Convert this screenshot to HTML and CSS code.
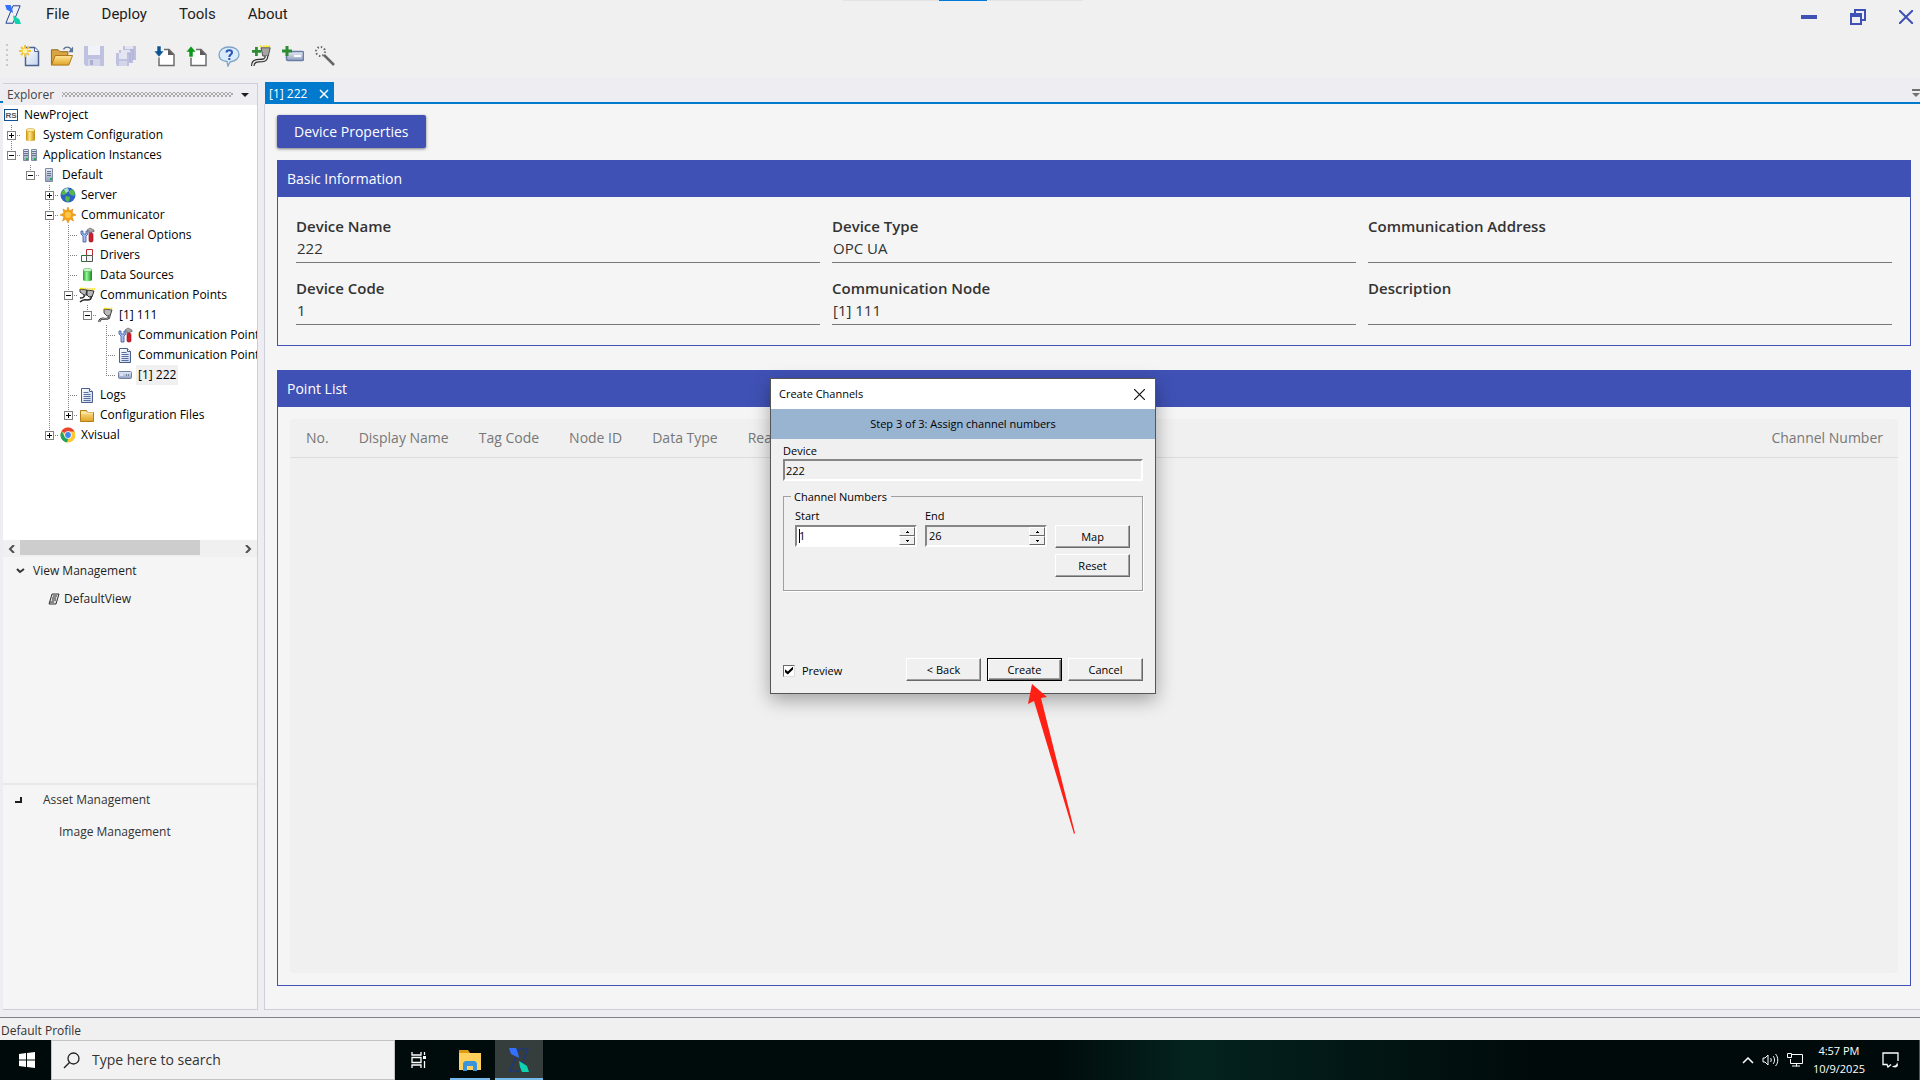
FILE: index.html
```html
<!DOCTYPE html>
<html lang="en">
<head>
<meta charset="utf-8">
<title>NewProject</title>
<link rel="stylesheet" href="styles.css">
</head>
<body>
<svg class="defs" aria-hidden="true">
  <defs>
    <linearGradient id="gold" x1="0" x2="1"><stop offset="0" stop-color="#c98f10"/><stop offset=".4" stop-color="#ffe680"/><stop offset="1" stop-color="#c08a10"/></linearGradient>
    <linearGradient id="green" x1="0" x2="1"><stop offset="0" stop-color="#16a016"/><stop offset=".4" stop-color="#9cf59c"/><stop offset="1" stop-color="#0f8a1c"/></linearGradient>
    <linearGradient id="folder" x1="0" y1="0" x2="0" y2="1"><stop offset="0" stop-color="#ffe79a"/><stop offset="1" stop-color="#e0a224"/></linearGradient>
    <linearGradient id="paper" x1="0" y1="0" x2="1" y2="1"><stop offset="0" stop-color="#ffffff"/><stop offset="1" stop-color="#c3d3ee"/></linearGradient>
    <linearGradient id="steel" x1="0" y1="0" x2="0" y2="1"><stop offset="0" stop-color="#e9eef8"/><stop offset="1" stop-color="#8f9fc0"/></linearGradient>
  </defs>
  <symbol id="logo" viewBox="0 0 20 24">
    <path d="M10 1h9L10 23H1z" fill="none" stroke="#17388c" stroke-width="1.200"/>
    <path d="M0 0h7l2 5 1 5-4-2-4-2z" fill="#3270ff"/>
    <path d="M10 13l5 3 3 2 2 6h-7l-2-5z" fill="#0fd3ad"/>
  </symbol>
  <symbol id="cylinder" viewBox="0 0 16 16">
    <path d="M4 3v10c0 1.500 9 1.500 9 0V3z" fill="url(#gold)"/><ellipse cx="8.500" cy="3" rx="4.500" ry="1.500" fill="#fff0b0" stroke="#c99a20" stroke-width=".6"/>
  </symbol>
  <symbol id="cylinder-green" viewBox="0 0 16 16">
    <path d="M4 3v10c0 1.500 9 1.500 9 0V3z" fill="url(#green)"/><ellipse cx="8.500" cy="3" rx="4.500" ry="1.500" fill="#d4ffd4" stroke="#3aa63a" stroke-width=".6"/>
  </symbol>
  <symbol id="server" viewBox="0 0 16 16">
    <path d="M4.500 1.500h7v13h-7z" fill="url(#steel)" stroke="#7f8ca0"/><path d="M6 4.500h4M6 6.500h4M6 8.500h4" stroke="#64748c"/><path d="M9 11h2v2H9z" fill="#21b14c"/>
  </symbol>
  <symbol id="servers" viewBox="0 0 16 16">
    <path d="M1.500 2.500h5v11h-5zM9.500 2.500h5v11h-5z" fill="url(#steel)" stroke="#7f8ca0"/><path d="M2 4.500h4M2 6.500h4M2 8.500h4M10 4.500h4M10 6.500h4M10 8.500h4" stroke="#64748c"/><path d="M4 11h2v2H4zM12 11h2v2h-2z" fill="#21b14c"/>
  </symbol>
  <symbol id="globe" viewBox="0 0 16 16">
    <circle cx="8" cy="8" r="7.500" fill="#2b62c4"/><path d="M3 3l4-2 1 3-2 3-3 1-2-1zM9 4l4-2 2 4-1 3-3-1-2-2zM6 9l4 1-1 4-2 1-2-3z" fill="#58b74a"/><path d="M4 2l4-1 1 3-3 2z" fill="#c7e8f5" opacity=".8"/>
  </symbol>
  <symbol id="burst" viewBox="0 0 16 16">
    <path d="M8 0l1.500 4L13 2l-1 4 4 2-4 1.500L13.500 14 10 12l-2 4-2-4-3.500 2L4 9.500 0 8l4-2-1-4 3.500 2z" fill="#f6a416" stroke="#d9860c" stroke-width=".6"/><circle cx="8" cy="8" r="3" fill="#ffc64a"/>
  </symbol>
  <symbol id="tools" viewBox="0 0 16 16">
    <path d="M2 4v3l2 2v6h3V9l2-2V4H7v3H4V4z" fill="#a9bdf0" stroke="#35539a" stroke-width=".8"/><path d="M8 3l3-2 4 2v2l-2-1v2h-3V4z" fill="#aaa" stroke="#555" stroke-width=".6"/><rect x="10" y="6" width="4" height="9" rx="1.500" fill="#cf1f2c" stroke="#8c0d18" stroke-width=".6"/>
  </symbol>
  <symbol id="blocks" viewBox="0 0 16 16">
    <path d="M7.500 2.500h6v6h-6z" fill="#fff" stroke="#bb2a33"/><path d="M2.500 8.500h5v6h-5z" fill="#fff" stroke="#22752a"/><path d="M7.500 8.500h6v6h-6z" fill="#f3f3f3" stroke="#555"/>
  </symbol>
  <symbol id="plug" viewBox="0 0 16 16">
    <path d="M6 2l8 1-2 6H9L6 6z" fill="#b9b9b9" stroke="#333" stroke-width=".9"/><path d="M6 1.500h9" stroke="#f1d900" stroke-width="1.500" stroke-dasharray="1.500 .7"/><path d="M11 8c1 3-1 4-4 4-3-1-5 0-6 3" fill="none" stroke="#222" stroke-width="2.200"/><path d="M11 8c1 3-1 4-4 4-3-1-5 0-6 3" fill="none" stroke="#ddd" stroke-width=".8"/>
  </symbol>
  <symbol id="plugs" viewBox="0 0 16 16">
    <path d="M1 2l7 1v5H5L1 5zM8 3l7 1-2 6h-3L7 7z" fill="#b9b9b9" stroke="#222" stroke-width=".9"/><path d="M1 1.500h7M8 2h8" stroke="#f1d900" stroke-width="1.500" stroke-dasharray="1.500 .7"/><path d="M12 9c1 3-1 4-4 4-3-1-5 0-7 2M5 8c1 2-1 3-4 3" fill="none" stroke="#222" stroke-width="1.500"/>
  </symbol>
  <symbol id="doc" viewBox="0 0 16 16">
    <path d="M2.500 1.500h8l3 3v11h-11z" fill="url(#paper)" stroke="#4a5f8c"/><path d="M10.500 1.500v3h3" fill="#fff" stroke="#4a5f8c"/><path d="M4.500 5.500h5M4.500 7.500h7M4.500 9.500h7M4.500 11.500h7M4.500 13.500h7" stroke="#5a6f9c"/>
  </symbol>
  <symbol id="device" viewBox="0 0 16 16">
    <rect x="1.500" y="4.500" width="13" height="7" rx="1" fill="url(#steel)" stroke="#7181a6"/><path d="M3 8h3" stroke="#fff"/><path d="M9 8h1M11 8h1" stroke="#29446e"/>
  </symbol>
  <symbol id="dir" viewBox="0 0 16 16">
    <path d="M1.500 3.500h6l1 2h6v9h-13z" fill="url(#folder)" stroke="#b07d17"/><path d="M2 6h12" stroke="#fff3c0"/>
  </symbol>
  <symbol id="chrome" viewBox="0 0 16 16">
    <circle cx="8" cy="8" r="7.500" fill="#fcc934"/><path d="M8 8L1.500 4.200A7.500 7.500 0 0 1 14.500 4.500H8z" fill="#ea4335"/><path d="M1.500 4.200L5 10l3.500 1L7 15.400A7.500 7.500 0 0 1 1.500 4.200z" fill="#1ea362"/><circle cx="8" cy="8" r="3.700" fill="#fff"/><circle cx="8" cy="8" r="2.900" fill="#4285f4"/>
  </symbol>
  <symbol id="plus-green" viewBox="0 0 10 10"><path d="M3.500 0h3v3.500H10v3H6.500V10h-3V6.500H0v-3h3.500z" fill="#2e8b35"/></symbol>
</svg>

<div class="top-strip"></div>

<header class="menubar">
  <svg class="logo"><use href="#logo"/></svg>
  <nav class="menu">
    <button>File</button><button>Deploy</button><button>Tools</button><button>About</button>
  </nav>
  <div class="window-controls">
    <button aria-label="Minimize"><svg width="16" height="16"><path d="M0 6h16v4H0z" fill="#3f51b5"/></svg></button>
    <button aria-label="Restore"><svg width="16" height="16"><path d="M5 4V1h10v10h-3M1 5h10v10H1z" fill="none" stroke="#3f51b5" stroke-width="2"/><path d="M0 4h12v4H0z" fill="#3f51b5"/></svg></button>
    <button aria-label="Close"><svg width="14" height="14"><path d="M0 0l14 14M14 0L0 14" stroke="#3f51b5" stroke-width="2"/></svg></button>
  </div>
</header>

<div class="toolbar">
  <span class="grip"></span>
  <button aria-label="New"><svg viewBox="0 0 22 22"><path d="M6.500 2.500h9l4 4v14h-13z" fill="url(#paper)" stroke="#4c638f" stroke-width="1.500"/><path d="M15.500 2.500v4h4" fill="#fff" stroke="#4c638f"/><path d="M6 0v12M0 6h12M2 2l8 8M10 2l-8 8" stroke="#f2c43b" stroke-width="2"/><circle cx="6" cy="6" r="2.500" fill="#fff3a8"/></svg></button>
  <button aria-label="Open"><svg class="wide" viewBox="0 0 25 22"><path d="M1.500 20.500v-16h7l2 2h8v5" fill="#d9a441" stroke="#8f6a1c"/><path d="M1.500 20.500l4-10h18l-4 10z" fill="url(#folder)" stroke="#a97416"/><path d="M14 4c2-3 6-3 8 0" fill="none" stroke="#5a7391" stroke-width="1.500"/><path d="M24 1v6h-5z" fill="#5a7391"/></svg></button>
  <button aria-label="Save" disabled><svg viewBox="0 0 22 22"><path d="M1 1h20v20H3l-2-2z" fill="#a9aed8"/><path d="M5 1h12v9H5z" fill="#f4f5fc"/><path d="M5 14h12v7H5z" fill="#c9cce4"/><path d="M7 15h3v5H7z" fill="#8d93c5"/></svg></button>
  <button aria-label="Save all" disabled><svg viewBox="0 0 22 22"><path d="M8 1h13v14h-3v3h-4v3H2l-1-2V8h3V5h4z" fill="#a9aed8"/><path d="M10 1h8v3h-8zM6 5h9v3H6zM4 8h8v6H4z" fill="#dfe1f2"/><path d="M4 16h8v5H4z" fill="#c9cce4"/><path d="M15 5h3v10M12 8h3v9" fill="none" stroke="#8d93c5"/></svg></button>
  <button class="spaced" aria-label="Import"><svg viewBox="0 0 22 22"><path d="M10 4.500h5l5 5v11H5v-8" fill="#fff" stroke="#6d6d6d" stroke-width="1.500"/><path d="M14 4v6h6z" fill="#5d5d5d"/><path d="M3 1h4v5h3l-5 6-5-6h3z" fill="#0b5394" stroke="#fff" stroke-width=".5"/></svg></button>
  <button aria-label="Export"><svg viewBox="0 0 22 22"><path d="M10 4.500h5l5 5v11H5v-8" fill="#fff" stroke="#6d6d6d" stroke-width="1.500"/><path d="M14 4v6h6z" fill="#5d5d5d"/><path d="M3 12h4V7h3L5 1 0 7h3z" fill="#0d9a1b" stroke="#fff" stroke-width=".5"/></svg></button>
  <button aria-label="Help"><svg viewBox="0 0 22 22"><path d="M11 2c6 0 10 3 10 7.500S17 16 12 17l-2 4-1-4.500C4 16 1 13.500 1 9.500S5 2 11 2z" fill="#d9ebfa" stroke="#7fa3c4" stroke-width="1.300"/><path d="M8.500 7.500c0-3 5.500-3 5.500 0 0 2-2.700 2-2.700 4.500" fill="none" stroke="#2a53b8" stroke-width="2"/><path d="M10.300 13h2v2h-2z" fill="#2a53b8"/></svg></button>
  <button aria-label="Add communication point"><svg class="wide" viewBox="0 0 24 24"><path d="M12 3h10l-2 9h-6z" fill="#a5a5a5" stroke="#444"/><path d="M11 1.500h12" stroke="#f1df00" stroke-width="2" stroke-dasharray="2 1"/><path d="M18 12c0 5-4 5-8 5-5 0-7 2-7 6" fill="none" stroke="#333" stroke-width="4"/><path d="M18 12c0 5-4 5-8 5-5 0-7 2-7 6" fill="none" stroke="#e6e6e6" stroke-width="1.500"/><use href="#plus-green" x="2" y="2" width="10" height="10"/></svg></button>
  <button aria-label="Add device"><svg viewBox="0 0 22 22"><rect x="4.500" y="6.500" width="17" height="9" rx="1.500" fill="url(#steel)" stroke="#6a7da5" stroke-width="1.500"/><path d="M12 11h7" stroke="#fff" stroke-width="2"/><use href="#plus-green" x="0" y="1" width="10" height="10"/></svg></button>
  <button aria-label="Wizard"><svg viewBox="0 0 22 22"><path d="M10 10l10 10" stroke="#666" stroke-width="2.500"/><circle cx="6.500" cy="6.500" r="4.500" fill="none" stroke="#666" stroke-width="2" stroke-dasharray="1.500 2"/></svg></button>
</div>

<main class="workspace">
  <div class="edge"></div>
  <aside class="explorer">
    <div class="pane-title"><h2>Explorer</h2><span class="dots"></span><button aria-label="Pane options"><svg width="8" height="4"><path d="M0 0h8L4 4z" fill="#1e1e1e"/></svg></button></div>
    <section class="tree-pane">
      <div class="tree-scroll">
      <ul class="tree">
        <li class="root"><div class="row"><svg class="icon"><rect x="1.500" y="2.500" width="13" height="11" fill="#fff" stroke="#0f4f94"/><text x="8" y="11" text-anchor="middle" class="rs">RS</text></svg><span class="label">NewProject</span></div></li>
        <li><div class="row"><button class="toggle closed" aria-label="Expand"></button><svg class="icon"><use href="#cylinder"/></svg><span class="label">System Configuration</span></div></li>
        <li><div class="row"><button class="toggle" aria-label="Collapse"></button><svg class="icon"><use href="#servers"/></svg><span class="label">Application Instances</span></div>
          <ul>
            <li><div class="row"><button class="toggle" aria-label="Collapse"></button><svg class="icon"><use href="#server"/></svg><span class="label">Default</span></div>
              <ul>
                <li><div class="row"><button class="toggle closed" aria-label="Expand"></button><svg class="icon"><use href="#globe"/></svg><span class="label">Server</span></div></li>
                <li><div class="row"><button class="toggle" aria-label="Collapse"></button><svg class="icon"><use href="#burst"/></svg><span class="label">Communicator</span></div>
                  <ul>
                    <li><div class="row leaf"><svg class="icon"><use href="#tools"/></svg><span class="label">General Options</span></div></li>
                    <li><div class="row leaf"><svg class="icon"><use href="#blocks"/></svg><span class="label">Drivers</span></div></li>
                    <li><div class="row leaf"><svg class="icon"><use href="#cylinder-green"/></svg><span class="label">Data Sources</span></div></li>
                    <li><div class="row"><button class="toggle" aria-label="Collapse"></button><svg class="icon"><use href="#plugs"/></svg><span class="label">Communication Points</span></div>
                      <ul>
                        <li><div class="row"><button class="toggle" aria-label="Collapse"></button><svg class="icon"><use href="#plug"/></svg><span class="label">[1] 111</span></div>
                          <ul>
                            <li><div class="row leaf"><svg class="icon"><use href="#tools"/></svg><span class="label">Communication Point Options</span></div></li>
                            <li><div class="row leaf"><svg class="icon"><use href="#doc"/></svg><span class="label">Communication Point Logs</span></div></li>
                            <li><div class="row leaf"><svg class="icon"><use href="#device"/></svg><span class="label selected">[1] 222</span></div></li>
                          </ul>
                        </li>
                      </ul>
                    </li>
                    <li><div class="row leaf"><svg class="icon"><use href="#doc"/></svg><span class="label">Logs</span></div></li>
                    <li><div class="row"><button class="toggle closed" aria-label="Expand"></button><svg class="icon"><use href="#dir"/></svg><span class="label">Configuration Files</span></div></li>
                  </ul>
                </li>
                <li><div class="row"><button class="toggle closed" aria-label="Expand"></button><svg class="icon"><use href="#chrome"/></svg><span class="label">Xvisual</span></div></li>
              </ul>
            </li>
          </ul>
        </li>
      </ul>
      </div>
      <div class="hscroll">
        <button aria-label="Scroll left"><svg width="7" height="8"><path d="M6 0L2 4l4 4" fill="none" stroke="#505050" stroke-width="2"/></svg></button>
        <div class="track"><div class="thumb"></div></div>
        <button aria-label="Scroll right"><svg width="7" height="8"><path d="M1 0l4 4-4 4" fill="none" stroke="#505050" stroke-width="2"/></svg></button>
      </div>
    </section>
    <section class="views">
      <div class="group"><svg width="9" height="6"><path d="M1 1l3 3 4-3" fill="none" stroke="#333" stroke-width="2"/></svg>View Management</div>
      <a class="child" href="#view"><svg width="12" height="12"><path d="M4 1h7L8 11H1z" fill="#ddd" stroke="#333"/><path d="M5 3h4M4 5h4M4 7h4M2 9h4" stroke="#333"/></svg>DefaultView</a>
    </section>
    <section class="assets">
      <div class="group"><svg width="7" height="6"><path d="M0 5h6V0" fill="none" stroke="#1e1e1e" stroke-width="2"/></svg>Asset Management</div>
      <a class="child" href="#images">Image Management</a>
    </section>
  </aside>

  <section class="document">
    <div class="tabs">
      <div class="tab">[1] 222<button aria-label="Close tab"><svg width="10" height="10"><path d="M1 1l8 8M9 1L1 9" stroke="#fff" stroke-width="1.500"/></svg></button></div>
      <button class="tab-list" aria-label="Open tabs"><svg width="8" height="8"><path d="M0 0h8v2H0zM0 4h8L4 8z" fill="#717171"/></svg></button>
    </div>
    <div class="page">
      <button class="primary">Device Properties</button>
      <section class="card">
        <h3>Basic Information</h3>
        <div class="fields">
          <label>Device Name<input readonly value="222"></label>
          <label>Device Type<input readonly value="OPC UA"></label>
          <label>Communication Address<input readonly value=""></label>
          <label>Device Code<input readonly value="1"></label>
          <label>Communication Node<input readonly value="[1] 111"></label>
          <label>Description<input readonly value=""></label>
        </div>
      </section>
      <section class="card points">
        <h3>Point List</h3>
        <div class="grid">
          <table>
            <thead><tr><th>No.</th><th>Display Name</th><th>Tag Code</th><th>Node ID</th><th>Data Type</th><th class="fill">Read</th><th>Channel Number</th></tr></thead>
          </table>
        </div>
      </section>
    </div>
  </section>
</main>

<div class="status">Default Profile</div>

<footer class="taskbar">
  <button class="start" aria-label="Start"><svg width="16" height="16"><path d="M0 2l7-1v6.500H0zM8 1l8-1v7.500H8zM0 8.500h7V15l-7-1zM8 8.500h8V16l-8-1z" fill="#fff"/></svg></button>
  <label class="search"><svg width="17" height="17"><circle cx="10.500" cy="6.500" r="5.500" fill="none" stroke="#222" stroke-width="1.300"/><path d="M6.500 10.500L1 16" stroke="#222" stroke-width="1.500"/></svg><input type="text" placeholder="Type here to search" aria-label="Search"></label>
  <button class="task" aria-label="Task view"><svg width="18" height="18"><path d="M2 1v3h9V1M2 17v-3h9v3M2 6.500h9v5H2zM14.500 1v3M14.500 10v7" fill="none" stroke="#fff" stroke-width="1.300"/><path d="M13 5h3v3h-3z" fill="#fff"/></svg></button>
  <button class="task open" aria-label="File Explorer"><svg width="22" height="21"><path d="M0 0h9l2 3H0z" fill="#e09c12"/><path d="M0 3h22v17H0z" fill="#ffd05c"/><path d="M4 13l2-2h10l2 2v8h-4v-5H8v5H4z" fill="#3b93dc"/></svg></button>
  <button class="task open active" aria-label="Designer"><svg class="logo big"><use href="#logo"/></svg></button>
  <div class="tray">
    <svg width="12" height="7"><path d="M1 6l5-5 5 5" fill="none" stroke="#fff" stroke-width="1.500"/></svg>
    <svg width="17" height="14"><path d="M1 5h2l3-3v10L3 9H1z" fill="none" stroke="#fff"/><path d="M8.500 5c1 1 1 3 0 4M11 3c2 2 2 6 0 8M13.500 1c3 3 3 9 0 12" fill="none" stroke="#fff"/></svg>
    <svg width="16" height="14"><path d="M5 1.500h10.500v9H3.500V6M9.500 10.500v3M5 13h8M.5.500h4v4h-4z" fill="none" stroke="#fff"/></svg>
    <time>4:57 PM<br>10/9/2025</time>
    <svg width="17" height="16"><path d="M9 12.500L6 15l-1-2.500H1V1h15v8" fill="none" stroke="#fff" stroke-width="1.300"/><path d="M15 10c0 3-2 4-5 4 1 2 6 2 6-1z" fill="#fff"/></svg>
  </div>
</footer>

<form class="dialog" role="dialog" aria-label="Create Channels">
  <div class="dialog-title">Create Channels<button type="button" aria-label="Close"><svg width="11" height="11"><path d="M0 0l11 11M11 0L0 11" stroke="#111" stroke-width="1.200"/></svg></button></div>
  <div class="banner">Step 3 of 3: Assign channel numbers</div>
  <div class="dialog-body">
    <label class="stack">Device<input class="sunken" readonly value="222"></label>
    <fieldset>
      <legend>Channel Numbers</legend>
      <label class="stack">Start
        <span class="spin sunken focused"><input type="number" value="1"><span class="steps"><button type="button" aria-label="Increase start"><svg width="3" height="2"><path d="M1 0h1v1h1v1H0V1h1z"/></svg></button><button type="button" aria-label="Decrease start"><svg width="3" height="2"><path d="M0 0h3v1H2v1H1V1H0z"/></svg></button></span></span>
      </label>
      <label class="stack">End
        <span class="spin sunken"><input type="number" readonly value="26"><span class="steps"><button type="button" aria-label="Increase end"><svg width="3" height="2"><path d="M1 0h1v1h1v1H0V1h1z"/></svg></button><button type="button" aria-label="Decrease end"><svg width="3" height="2"><path d="M0 0h3v1H2v1H1V1H0z"/></svg></button></span></span>
      </label>
      <div class="side"><button type="button" class="btn">Map</button><button type="button" class="btn">Reset</button></div>
    </fieldset>
    <div class="actions">
      <label class="check"><input type="checkbox" checked>Preview</label>
      <button type="button" class="btn">&lt; Back</button>
      <button type="button" class="btn default">Create</button>
      <button type="button" class="btn">Cancel</button>
    </div>
  </div>
</form>
<svg class="arrow" viewBox="0 0 48 152" aria-hidden="true"><path d="M4 0l15 13-6 1 34 135-1 1L6 17l-6 3z" fill="#ff2015"/></svg>
</body>
</html>
```
FILE: styles.css
```css
* { box-sizing: border-box; }
html, body { margin: 0; height: 100%; }
body {
  display: flex;
  flex-direction: column;
  min-height: 100vh;
  overflow: hidden;
  background: #f0f0f0;
  color: #1e1e1e;
  font: 12px/20px "Open Sans", "Noto Sans", sans-serif;
}
button, input { font: inherit; color: inherit; }
button { padding: 0; border: 0; background: none; }
svg { display: block; flex: none; }
ul { list-style: none; margin: 0; padding: 0; }
h2, h3 { margin: 0; font: inherit; }
a { color: inherit; text-decoration: none; }
.defs { position: absolute; width: 0; height: 0; }

.top-strip {
  position: absolute;
  top: 0;
  left: 843px;
  width: 240px;
  height: 1px;
  background: linear-gradient(90deg, #e3e3e3 40%, #0078d7 40% 60%, #e3e3e3 60%);
}

/* Menu bar */
.menubar { display: flex; align-items: center; height: 28px; padding: 0 7px 0 4px; }
.logo { width: 18px; height: 19px; }
.logo.big { width: 20px; height: 24px; }
.menu { display: flex; gap: 32px; margin-left: 24px; font: 15px/20px Roboto, sans-serif; }
.window-controls { display: flex; align-items: center; gap: 33px; margin: 6px 0 0 auto; }

/* Toolbar */
.toolbar { display: flex; align-items: center; height: 49px; padding: 6px 0 0 6px; }
.toolbar button { display: grid; place-items: center; width: 32px; height: 32px; }
.toolbar .spaced { margin-left: 7px; }
.toolbar svg { width: 22px; height: 22px; }
.toolbar svg.wide { width: 24px; }
.toolbar button:disabled { opacity: .7; }
.grip { width: 2px; height: 24px; margin-right: 6px; background: repeating-linear-gradient(#c9c9c9 0 2px, transparent 2px 5px); }

/* Workspace */
.workspace { display: grid; grid-template-columns: 3px 255px minmax(0, 1fr); flex: 1; min-height: 0; padding: 6px 0 7px; background: #eeeef2; }
.edge { background: linear-gradient(#007acc, #007acc) 0 18px / 3px 2px no-repeat; }
.explorer { display: grid; grid-template-columns: minmax(0, 1fr); grid-template-rows: 21px 2fr 1fr 1fr; min-height: 0; border: 1px solid #ccceda; border-left: 0; background: #f5f5f5; }
.pane-title { display: flex; align-items: center; gap: 8px; padding: 0 8px 0 4px; background: #eeeef2; color: #444; }
.dots { flex: 1; height: 5px; background: radial-gradient(#aaa 25%, transparent 30%) 0 0 / 4px 4px, radial-gradient(#aaa 25%, transparent 30%) 2px 2px / 4px 4px; }

.tree-pane { display: flex; flex-direction: column; min-height: 0; background: #fff; color: #000; }
.tree-scroll { flex: 1; min-height: 0; overflow: hidden; }
.tree li { background: repeating-linear-gradient(#808080 0 1px, transparent 1px 2px) 8px 0 / 1px 100% no-repeat; }
.tree li:last-child { background-size: 1px 10px; }
.tree .root { background: none; }
.tree ul { padding-left: 19px; }
.row { display: flex; align-items: center; height: 20px; white-space: nowrap; background: repeating-linear-gradient(90deg, #808080 0 1px, transparent 1px 2px) 8px 10px / 10px 1px no-repeat; }
.root .row { background: none; }
.row.leaf { padding-left: 19px; }
.icon { width: 16px; height: 16px; margin-right: 3px; }
.rs { font: bold 8px "Liberation Sans", sans-serif; fill: #555; }
.toggle {
  width: 9px;
  height: 9px;
  margin: 0 6px 0 4px;
  border: 1px solid #808080;
  background: linear-gradient(#000, #000) center / 5px 1px no-repeat, #fff;
}
.toggle.closed { background: linear-gradient(#000, #000) center / 5px 1px no-repeat, linear-gradient(#000, #000) center / 1px 5px no-repeat, #fff; }
.label { padding: 0 2px; }
.selected { background: #f0f0f0; }

.hscroll { display: flex; height: 17px; background: #f0f0f0; }
.hscroll button { display: grid; place-items: center; width: 17px; }
.track { flex: 1; }
.thumb { width: 82%; height: 15px; background: #cdcdcd; }

.group { display: flex; align-items: center; }
.child { display: flex; align-items: center; }
.views { padding: 4px 0 0 13px; }
.views .group { gap: 8px; }
.views .child { gap: 4px; padding: 8px 0 0 32px; }
.assets { padding: 5px 0 0 12px; border-top: 2px solid #e8e8e8; color: #333; }
.assets .group { gap: 21px; }
.assets .child { padding: 12px 0 0 44px; }

/* Document area */
.document { display: flex; flex-direction: column; min-width: 0; margin-left: 6px; }
.tabs { display: flex; align-items: center; justify-content: space-between; height: 21px; margin-left: 1px; border-bottom: 2px solid #007acc; }
.tab { display: flex; align-items: center; gap: 12px; height: 21px; padding: 2px 5px 0 4px; background: #007acc; color: #fff; }
.page { display: flex; flex-direction: column; flex: 1; padding: 11px 9px 23px 12px; border: 1px solid #ccceda; border-width: 0 0 1px 1px; background: #f5f5f5; }
.primary { align-self: flex-start; height: 33px; padding: 0 17px; border-radius: 2px; background: #3f51b5; color: #fff; font-size: 14px; box-shadow: 0 1px 3px #00000080; }
.card { margin-top: 12px; border: 1px solid #3f51b5; font-size: 15px; }
.card h3 { height: 36px; padding: 0 9px; font-size: 14px; line-height: 36px; background: #3f51b5; color: #fff; }
.fields { display: grid; grid-template-columns: repeat(3, 1fr); gap: 15px 12px; padding: 19px 18px 20px 18px; }
.fields label { font-weight: 600; color: #333; }
.fields input { display: block; width: 100%; height: 27px; padding: 0 0 2px 1px; border: 0; border-bottom: 1px solid #777; background: none; font-weight: 400; outline: 0; }
.points { display: flex; flex: 1; flex-direction: column; margin-top: 24px; }
.grid { flex: 1; margin: 12px; border-radius: 4px; background: #f0f0f0; }
table { width: 100%; border-collapse: collapse; }
th { width: 1px; height: 38px; padding: 0 15px; border-bottom: 1px solid #dcdcdc; font-size: 14px; font-weight: 400; text-align: left; white-space: nowrap; color: #777; }
th:first-child { padding-left: 16px; }
th.fill { width: auto; }

.status { height: 23px; padding-left: 1px; border-top: 1px solid #808085; line-height: 26px; color: #333; }

/* Taskbar */
.taskbar { display: flex; height: 40px; background: linear-gradient(90deg, #000a0a, #000c0c 55%, #04231f 62%, #000a0a 80%); color: #fff; }
.start { display: grid; place-items: center; width: 51px; padding-left: 3px; }
.search { display: flex; align-items: center; gap: 10px; width: 344px; padding-left: 11px; border: 1px solid #c4c4c4; background: #f2f2f2; color: #222; }
.search input { flex: 1; min-width: 0; border: 0; background: none; font-size: 14px; outline: 0; }
.search input::placeholder { color: #333; opacity: 1; }
.task { display: grid; place-items: center; width: 48px; margin-right: 4px; }
.task.open { border-bottom: 2px solid #76b9ed; border-top: 2px solid transparent; }
.task.open:not(.active) { width: 40px; margin: 0 5px 0 3px; }
.task.active { background: #363d3d; }
.tray { display: flex; align-items: center; gap: 8px; margin-left: auto; padding-right: 20px; border-right: 1px solid #555; }
.tray time { margin: 0 9px 0 2px; font-size: 11px; line-height: 18px; text-align: center; }

/* Create Channels dialog */
.dialog {
  position: absolute;
  top: 378px;
  left: 770px;
  display: flex;
  flex-direction: column;
  width: 386px;
  height: 316px;
  border: 1px solid #555;
  background: #f0f0f0;
  color: #000;
  font-size: 11px;
  line-height: 16px;
  box-shadow: 0 6px 18px #00000055;
}
.dialog-title { display: flex; align-items: center; justify-content: space-between; height: 30px; padding: 0 10px 0 8px; background: #fff; }
.banner { height: 30px; line-height: 30px; text-align: center; background: #99b4d1; }
.dialog-body { display: flex; flex: 1; flex-direction: column; padding: 4px 12px 12px; }
.stack { display: flex; flex-direction: column; }
.sunken { height: 22px; border: 2px solid; border-color: #868686 #fff #fff #868686; background: #f0f0f0; outline: 0; padding: 0 1px; }
fieldset { display: flex; gap: 8px; min-width: 0; height: 104px; margin: 6px 0 0; padding: 3px 11px 0; border: 1px solid #a0a0a0; box-shadow: 1px 1px #fff; }
legend { margin-left: -4px; padding: 2px 4px 0 3px; }
fieldset .stack { gap: 1px; width: 122px; }
.spin { display: flex; padding: 0; }
.spin input { flex: 1; min-width: 0; border: 0; padding: 0 2px; background: none; appearance: textfield; outline: 0; }
.spin input::-webkit-inner-spin-button { appearance: none; }
.spin.focused { background: linear-gradient(#000, #000) 2px 2px / 1px 14px no-repeat, #fff; }
.steps { display: flex; flex-direction: column; width: 16px; }
.steps button { display: grid; flex: 1; place-items: center; border: 1px solid; border-color: #fff #696969 #696969 #fff; background: #f0f0f0; }
.side { display: flex; flex-direction: column; gap: 6px; padding-top: 17px; }
.btn { width: 75px; height: 23px; border: 1px solid; border-color: #fff #696969 #696969 #fff; background: #f0f0f0; box-shadow: inset -1px -1px #a0a0a0; }
.btn.default { border-color: #000; box-shadow: inset 1px 1px #fff, inset -1px -1px #696969, inset -2px -2px #a0a0a0; }
.actions { display: flex; align-items: center; gap: 6px; margin-top: auto; }
.check { display: flex; align-items: center; gap: 7px; margin-right: auto; padding-top: 2px; }
.check input {
  appearance: none;
  width: 12px;
  height: 12px;
  margin: 0;
  padding: 1px;
  border: 1px solid;
  border-color: #696969 #ddd #ddd #696969;
  background: #fff;
}
.check input:checked::before {
  content: "";
  display: block;
  height: 8px;
  background: #000;
  clip-path: polygon(0 35%, 35% 62%, 100% 0, 100% 38%, 35% 100%, 0 73%);
}
.arrow { position: absolute; top: 684px; left: 1028px; width: 48px; height: 152px; }
```
